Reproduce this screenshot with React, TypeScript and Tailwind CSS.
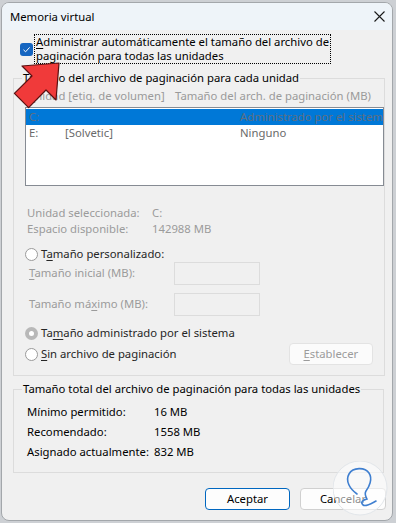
import React from 'react';

// ─── Piezas pequeñas ───────────────────────────────────────────────────────

function Radio({ checked = false }: { checked?: boolean }) {
  return checked ? (
    <span className="flex h-[13px] w-[13px] shrink-0 items-center justify-center rounded-full bg-[#b8b8b8]">
      <span className="h-[5px] w-[5px] rounded-full bg-white" />
    </span>
  ) : (
    <span className="h-[13px] w-[13px] shrink-0 rounded-full border border-[#9a9a9a] bg-white" />
  );
}

function Ul({ children }: { children: React.ReactNode }) {
  return <span className="underline underline-offset-[2px]">{children}</span>;
}

export default function App() {
  return (
    <div className="relative h-[523px] w-[396px] overflow-hidden bg-[#cdd0d4] pl-[1px] pt-[2px] font-['Noto_Sans',sans-serif] text-[11.3px] text-black">
      <div className="flex h-[519px] w-[392px] flex-col overflow-hidden whitespace-nowrap rounded-[8px] border border-[#a3a7ab] bg-[#f0f0f0]">
        {/* Barra de título */}
        <div className="flex h-[27px] shrink-0 items-center justify-between bg-[#eef4f9] pl-[8px] pr-[7px]">
          <span className="leading-[14px]">Memoria virtual</span>
          <svg width="11" height="11" viewBox="0 0 11 11" stroke="#1a1a1a" strokeWidth="1.1">
            <path d="M0.5 0.5 L10.5 10.5 M10.5 0.5 L0.5 10.5" />
          </svg>
        </div>

        {/* Casilla principal */}
        <div className="mt-[4px] flex items-center pl-[18px]">
          <span className="flex h-[13px] w-[13px] shrink-0 items-center justify-center rounded-[3px] bg-[#1565c0]">
            <svg width="9" height="9" viewBox="0 0 9 9" fill="none" stroke="white" strokeWidth="1">
              <path d="M1.5 4.8 L3.6 6.8 L7.6 2.4" />
            </svg>
          </span>
          <div className="ml-[1px] border border-dotted border-black px-[1px] leading-[14px]">
            <Ul>A</Ul>dministrar automáticamente el tamaño del archivo de
            <br />
            paginación para todas las unidades
          </div>
        </div>

        {/* Grupo: tamaño por unidad */}
        <fieldset className="ml-[11px] mt-[7px] w-[371px] border border-[#dcdcdc] pb-[10px] pl-[8px]">
          <legend className="px-[1px] leading-[14px]">Tamaño del archivo de paginación para cada unidad</legend>
          <div className="mt-[4px] flex pl-[5px] leading-[14px] text-[#9a9a9a]">
            <span className="w-[148px]">
              <Ul>U</Ul>nidad [etiq. de volumen]
            </span>
            <span>Tamaño del arch. de paginación (MB)</span>
          </div>

          <div className="ml-[3px] mt-[4px] h-[79px] border border-[#868b93] bg-white pt-[1px]">
            <div className="flex h-[16px] items-center overflow-hidden bg-[#0078d7] pl-[3px] text-[#5f6f82]">
              <span className="w-[211px] shrink-0">C:</span>
              <span>Administrado por el sistem</span>
            </div>
            <div className="flex h-[16px] items-center pl-[3px] text-[#6a6a6a]">
              <span className="w-[36px]">E:</span>
              <span className="w-[175px]">[Solvetic]</span>
              <span>Ninguno</span>
            </div>
          </div>

          <div className="mt-[19px] pl-[5px] leading-[16px] text-[#9b9b9b]">
            <div className="flex">
              <span className="w-[125px]">Unidad seleccionada:</span>
              <span>C:</span>
            </div>
            <div className="flex">
              <span className="w-[125px]">Espacio disponible:</span>
              <span>142988 MB</span>
            </div>
          </div>

          <div className="ml-[3px] mt-[10px] flex items-center gap-[3px] leading-[14px] text-[#262626]">
            <Radio />
            <span>
              T<Ul>a</Ul>maño personalizado:
            </span>
          </div>

          <div className="mt-[1px] flex items-center pl-[7px] text-[#9b9b9b]">
            <span className="w-[145px]">
              <Ul>T</Ul>amaño inicial (MB):
            </span>
            <span className="h-[23px] w-[86px] border border-[#dcdcdc]" />
          </div>
          <div className="mt-[8px] flex items-center pl-[7px] text-[#9b9b9b]">
            <span className="w-[145px]">
              Tamaño má<Ul>x</Ul>imo (MB):
            </span>
            <span className="h-[23px] w-[86px] border border-[#dcdcdc]" />
          </div>

          <div className="ml-[3px] mt-[10px] flex items-center gap-[3px] leading-[14px] text-[#262626]">
            <Radio checked />
            <span>
              Ta<Ul>m</Ul>año administrado por el sistema
            </span>
          </div>
          <div className="ml-[3px] mt-[3px] flex h-[22px] items-center pr-[11px] text-[#262626]">
            <Radio />
            <span className="ml-[3px]">
              <Ul>S</Ul>in archivo de paginación
            </span>
            <span className="ml-auto flex h-[22px] w-[84px] items-center justify-center rounded-[4px] border border-[#e3e3e3] bg-[#fbfbfb] text-[#9b9b9b]">
              <Ul>E</Ul>stablecer
            </span>
          </div>
        </fieldset>

        {/* Grupo: total */}
        <fieldset className="ml-[11px] mt-[6px] w-[371px] border border-[#dcdcdc] pb-[10px] pl-[8px]">
          <legend className="px-[1px] leading-[14px]">Tamaño total del archivo de paginación para todas las unidades</legend>
          <div className="mt-[6px] pl-[5px] leading-[20px]">
            <div className="flex">
              <span className="w-[127px]">Mínimo permitido:</span>
              <span>16 MB</span>
            </div>
            <div className="flex">
              <span className="w-[127px]">Recomendado:</span>
              <span>1558 MB</span>
            </div>
            <div className="flex">
              <span className="w-[127px]">Asignado actualmente:</span>
              <span>832 MB</span>
            </div>
          </div>
        </fieldset>

        {/* Botones */}
        <div className="mt-[15px] flex justify-end gap-[10px] pr-[6px]">
          <button className="h-[22px] w-[85px] rounded-[4px] border border-[#0067c0] bg-[#fdfdfd] leading-[14px]">
            Aceptar
          </button>
          <button className="h-[22px] w-[86px] rounded-[4px] border border-[#d0d0d0] bg-[#fdfdfd] leading-[14px]">
            Cancelar
          </button>
        </div>
      </div>

      {/* Flecha roja superpuesta */}
      <svg className="absolute left-0 top-0" width="80" height="120" viewBox="0 0 80 120">
        <polygon
          points="59,63 56,100 46,90 28.6,107.6 14.4,93.4 32,76 22,66"
          fill="#f03a3a"
          stroke="#5a1010"
          strokeWidth="1.2"
          strokeLinejoin="round"
        />
      </svg>

      {/* Marca de agua */}
      <svg className="absolute left-[333px] top-[461px]" width="56" height="62" viewBox="0 0 56 62">
        <circle cx="27" cy="27" r="27" fill="white" fillOpacity="0.55" stroke="#e2e6ea" strokeWidth="1" />
        <path
          d="M24 33 C17 28 12 20 16 13 C20 6 32 6 36 12 C40 18 36 26 33 30 C31 33 33 36 34 38 C30 39 27 41 30 44 C33 46 39 42 43 40"
          fill="none"
          stroke="#3f7fd0"
          strokeWidth="1.6"
          strokeLinecap="round"
        />
      </svg>
    </div>
  );
}
